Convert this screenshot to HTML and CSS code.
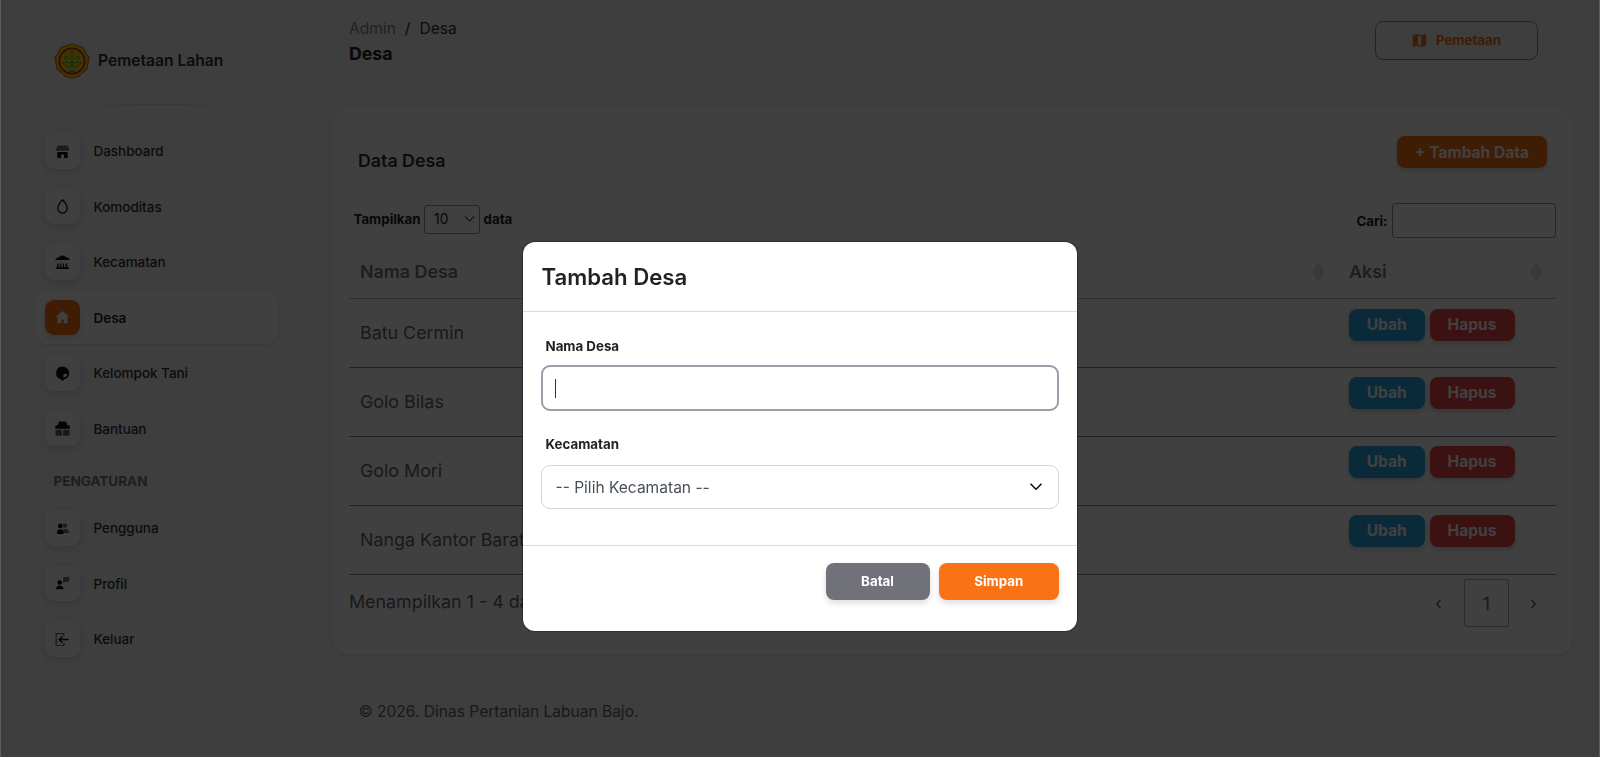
FILE: index.html
```html
<!DOCTYPE html>
<html lang="id">
<head>
<meta charset="utf-8">
<title>Desa</title>
<link rel="stylesheet" href="styles.css">
</head>
<body>
<div class="page">
  <aside class="sidebar">
    <div class="brand">
      <svg class="logo" viewBox="0 0 36 36"><path d="M18 .8 29 4.800 35 14.500 33 26 24.500 33.500 18 35.200 11.500 33.500 3 26 1 14.500 7 4.800z" fill="#fbd213" stroke="#b98a2c" stroke-width="1.200"/><circle cx="18" cy="18" r="12.600" fill="none" stroke="#e02020" stroke-width="1.700"/><g fill="none" stroke="#45b81c" stroke-width="1"><path d="M18 24V14M18 14c-2.300-2-2-4.200 0-6.500 2 2.300 2.300 4.500 0 6.500zM18 20c-4 0-7-2-7.500-6.500 4 .5 6.500 2.500 7.500 6.500zM18 20c4 0 7-2 7.500-6.500-4 .5-6.500 2.500-7.500 6.500zM18 23c-3 1.200-6.500.5-9.500-3 4-1.500 7.500-.5 9.500 3zM18 23c3 1.200 6.500.5 9.500-3-4-1.500-7.500-.5-9.500 3z"/></g><path d="M14 26.500q4 2 8 0-1.500 2.500-4 2.500t-4-2.500z" fill="#2196e8"/></svg>
      <span>Pemetaan Lahan</span>
    </div>
    <div class="rule"></div>
    <nav>
      <a class="item"><i class="ico"><svg viewBox="0 0 16 16"><path d="M2.800 1.500h10.400L15 5.200c0 1.300-.8 2.200-2 2.200s-1.700-.8-1.700-.8-.6.800-1.700.8S8 6.600 8 6.600s-.5.800-1.600.8-1.700-.8-1.700-.8-.5.800-1.700.8-2-.9-2-2.200z" opacity=".6"/><path d="M2.500 8.600h11v6.200h-3.800v-3.600H6.500v3.600h-4z"/></svg></i>Dashboard</a>
      <a class="item"><i class="ico"><svg viewBox="0 0 16 16"><path d="M8 .8C5.300 3.600 3 7 3 9.900a5 5.200 0 0 0 10 0C13 7 10.700 3.600 8 .8z" fill="none" stroke="#111" stroke-width="1.400"/></svg></i>Komoditas</a>
      <a class="item"><i class="ico"><svg viewBox="0 0 16 16"><path d="M8 .3 15.500 4v1.200H.5V4zM2.200 9h1.700v4H2.200zM5.400 9h1.400v4H5.400zM8.300 9h1.400v4H8.300zM11.300 9H13v4h-1.700zM1.500 13h13v.9h.6v1H.9v-1h.6z"/></svg></i>Kecamatan</a>
      <a class="item active"><i class="ico"><svg viewBox="0 0 16 16"><path d="M8 1 15 7.300h-1.800v6.900H9.300V10H6.700v4.200H2.800V7.300H1z" fill="#fff"/></svg></i>Desa</a>
      <a class="item"><i class="ico"><svg viewBox="0 0 16 16"><path d="M8 .6a7 7 0 0 0-2.200 13.600l1 .3.400 1.200h1.600l.5-1.200A7 7 0 0 0 8 .6zM9 12.400V8.500h4.200A4.600 4.600 0 0 1 9 12.400z"/></svg></i>Kelompok Tani</a>
      <a class="item"><i class="ico"><svg viewBox="0 0 16 16"><path d="M.3 8.300V5.800q0-1.300 1.300-1.300h1.600C2.600.6 6.500-1 8 1.100c1.500-2.100 5.400-.5 4.800 3.400h1.600q1.300 0 1.300 1.300v2.500z"/><path d="M.5 9.200h6.900v6.600H1.900Q.5 15.800.5 14.400zM8.600 9.200h6.900v5.200q0 1.400-1.400 1.400H8.600z" opacity=".65"/></svg></i>Bantuan</a>
      <h6 class="section">PENGATURAN</h6>
      <a class="item"><i class="ico"><svg viewBox="0 0 16 16"><g opacity=".6"><circle cx="10.600" cy="5" r="2.300"/><path d="M9 8.500h2.500q3.500 0 3.500 4.300H9.500z"/></g><circle cx="5.700" cy="5.200" r="2.500"/><path d="M2 13.500q-.5-4.800 3.700-4.800t3.700 4.800q-3.700 1-7.400 0z"/></svg></i>Pengguna</a>
      <a class="item"><i class="ico"><svg viewBox="0 0 16 16"><path d="M8.700 1h6.300v5h-4l-2.300 2z" opacity=".6"/><circle cx="5" cy="7" r="2.500"/><path d="M1 14q0-3.600 4-3.600T9 14z"/></svg></i>Profil</a>
      <a class="item"><i class="ico"><svg viewBox="0 0 16 16"><path d="M9.500 4.500V1.800H1.200v12.600h8.300v-2.700" fill="none" stroke="#111" stroke-width="1.300" opacity=".65"/><path d="M14.500 8.100H4.500M8 4.800 4.500 8.100 8 11.400" fill="none" stroke="#111" stroke-width="1.600"/></svg></i>Keluar</a>
    </nav>
  </aside>
  <main class="main">
    <header class="top">
      <div>
        <div class="crumbs"><span class="muted">Admin</span><span>/</span><span>Desa</span></div>
        <h1>Desa</h1>
      </div>
      <a class="map-btn"><svg viewBox="0 0 16 16"><path fill-rule="evenodd" d="M.8 2.600 5.300 1l5.400 1.500L14 1q1.300-.3 1.300 1v11.200L10.700 15l-5.400-1.500L2 15q-1.200.2-1.200-1zM6.200 2.900v9.400l3.600 1V3.900z"/></svg>Pemetaan</a>
    </header>
    <section class="card">
      <div class="card-head"><h2>Data Desa</h2><a class="btn orange">+ Tambah Data</a></div>
      <div class="tools">
        <label class="length">Tampilkan <span class="mini-select">10<svg viewBox="0 0 12 8"><path d="m1.300 1.500 4.700 4.700 4.700-4.700" fill="none" stroke="#333" stroke-width="1.200"/></svg></span> data</label>
        <label class="search">Cari: <input type="text"></label>
      </div>
      <div class="row head"><div>Nama Desa<svg class="sort" viewBox="0 0 14 22"><path d="M7 0l7 11-7 11L0 11z"/></svg></div><div>Aksi<svg class="sort" viewBox="0 0 14 22"><path d="M7 0l7 11-7 11L0 11z"/></svg></div></div>
      <div class="row"><div>Batu Cermin</div><div class="acts"><a class="btn blue">Ubah</a><a class="btn red">Hapus</a></div></div>
      <div class="row"><div>Golo Bilas</div><div class="acts"><a class="btn blue">Ubah</a><a class="btn red">Hapus</a></div></div>
      <div class="row"><div>Golo Mori</div><div class="acts"><a class="btn blue">Ubah</a><a class="btn red">Hapus</a></div></div>
      <div class="row"><div>Nanga Kantor Barat</div><div class="acts"><a class="btn blue">Ubah</a><a class="btn red">Hapus</a></div></div>
      <div class="foot"><span>Menampilkan 1 - 4 dari 4 data</span><div class="pager"><span>‹</span><span class="cur">1</span><span>›</span></div></div>
    </section>
    <footer>© 2026. Dinas Pertanian Labuan Bajo.</footer>
  </main>
</div>
<div class="overlay">
  <div class="modal">
    <h3>Tambah Desa</h3>
    <div class="body">
      <label>Nama Desa</label>
      <div class="field focus"><span class="caret"></span></div>
      <label>Kecamatan</label>
      <div class="field">-- Pilih Kecamatan --<svg viewBox="0 0 12 8"><path d="m1 1.200 5 5 5-5" fill="none" stroke="#111" stroke-width="1.600" stroke-linecap="round" stroke-linejoin="round"/></svg></div>
    </div>
    <div class="actions"><button class="cancel">Batal</button><button class="save">Simpan</button></div>
  </div>
</div>
</body>
</html>
```
FILE: styles.css
```css
* { box-sizing: border-box; }
body { margin: 0; width: 1600px; height: 757px; overflow: hidden; font-family: Inter, sans-serif; color: #333; background: #f5f5f5; }
h1, h2, h3, h6 { margin: 0; }
svg { display: block; }
.page { display: flex; height: 757px; }

.sidebar { width: 331.500px; padding-left: 36px; }
.brand { display: flex; align-items: center; gap: 8.500px; height: 104px; padding: 18px 0 0 17.500px; font-size: 15.600px; font-weight: 600; }
.brand span { padding-bottom: 1px; }
.logo { width: 36px; height: 36px; }
.rule { width: 242px; height: 1px; background: linear-gradient(90deg, transparent, #dcdcdc, transparent); }
nav { padding-top: 19.500px; }
.item { display: flex; align-items: center; gap: 13.500px; width: 242px; height: 53px; margin-bottom: 2.5px; padding-left: 8.5px; border-radius: 12px; font-size: 13.500px; letter-spacing: -.03px; font-weight: 500; }
.ico { display: flex; align-items: center; justify-content: center; width: 35.500px; height: 35.500px; border-radius: 9px; background: #fff; box-shadow: 0 3px 6px rgba(0, 0, 0, .12); }
.ico svg { width: 15px; height: 15px; fill: #111; }
.active { background: #fff; box-shadow: 0 1px 2px rgba(0, 0, 0, .1); color: #222; font-weight: 600; }
.active .ico { background: #f97316; }
.section { height: 44px; padding: 3px 0 0 17.500px; font-size: 13.500px; font-weight: 700; line-height: 41px; color: #777; }

.main { width: 1241.500px; }
.top { display: flex; justify-content: space-between; height: 109px; padding: 18px 35px 0 17.500px; }
.crumbs { display: flex; gap: 9px; font-size: 15.550px; line-height: 21px; }
.muted { color: #888; }
h1 { font-size: 17.700px; line-height: 30px; color: #222; }
.map-btn { display: flex; align-items: center; justify-content: center; gap: 9px; width: 163px; height: 39px; margin-top: 3px; padding-bottom: 1px; border: 1px solid #f97316; border-radius: 8px; color: #f97316; font-size: 13.300px; font-weight: 700; }
.map-btn svg { width: 15px; height: 15px; fill: #f97316; }

.card { height: 545px; padding: 27px 17px 0 17.500px; border-radius: 16px; background: #fff; box-shadow: 0 1px 3px rgba(0, 0, 0, .1); }
.card-head { display: flex; justify-content: space-between; height: 67px; padding: 0 9px; }
h2 { padding-top: 14px; font-size: 17.800px; font-weight: 600; line-height: 22px; }
.btn { display: flex; align-items: center; justify-content: center; height: 32px; border-radius: 8px; color: #fff; font-size: 15.550px; font-weight: 700; box-shadow: 0 3px 5px rgba(0, 0, 0, .16); }
.orange { width: 150px; background: #f97316; }
.blue { width: 75.500px; background: #2ba7e5; }
.red { width: 85px; background: #ef4444; }
.tools { display: flex; justify-content: space-between; height: 43px; font-size: 13.300px; font-weight: 700; color: #222; }
.length, .search { display: flex; align-items: center; gap: 4px; }
.length { gap: 3.500px; height: 32px; padding-left: 4.500px; }
.search { height: 35px; line-height: 14px; }
.search input { width: 164.500px; height: 35px; border: 1px solid #999; border-radius: 3px; background: #fff; }
.mini-select { display: flex; align-items: center; justify-content: space-between; width: 56px; height: 29px; padding: 0 4px 0 9px; border: 1px solid #999; border-radius: 3px; font-size: 13.800px; font-weight: 400; }
.mini-select svg { width: 11px; height: 8px; }
.row { display: grid; grid-template-columns: 989px 218px; height: 68.900px; border-bottom: 1px solid #888; font-size: 17.850px; line-height: 68px; color: #666; }
.row > div { padding-left: 11px; }
.row.head { height: 53px; border-bottom-color: #bbb; line-height: 52px; font-weight: 600; color: #777; }
.head > div { display: flex; align-items: center; justify-content: space-between; padding-right: 13px; }
.sort { width: 13px; height: 20px; fill: #e4e4e4; }
.acts { display: flex; gap: 5px; padding-top: 9.500px; }
.foot { display: flex; justify-content: space-between; padding-top: 4px; font-size: 17.850px; line-height: 46.500px; color: #666; }
.pager { display: flex; }
.pager span { width: 41px; height: 48px; text-align: center; line-height: 48px; }
.pager .cur { width: 45px; margin: 0 4px 0 5px; border: 1px solid #aaa; border-radius: 2px; }
.pager span:last-child { margin-right: 2px; }
footer { padding: 45.500px 0 0 27px; font-size: 15.550px; line-height: 23px; color: #666; }

.overlay { position: fixed; inset: 0; padding: 242px 0 0 523px; border: solid #5d5d5d; border-width: 0 1px; background: rgba(0, 0, 0, .75); background-clip: padding-box; }
.modal { width: 554px; height: 389px; margin-left: -1px; border-radius: 12px; background: #fff; box-shadow: 0 0 2px #000; }
h3 { height: 70px; padding: 0 18.500px; border-bottom: 1px solid #d8dade; font-size: 22.200px; font-weight: 600; line-height: 70px; color: #222; }
.body { height: 234px; padding: 26px 18px 0; border-bottom: 1px solid #d8dade; }
.body label { display: block; height: 27px; padding-left: 4.500px; font-size: 13.300px; font-weight: 700; line-height: 16px; color: #222; }
.field { display: flex; align-items: center; justify-content: space-between; height: 44px; padding: 0 16.500px 0 13.500px; border: 1px solid #d2d6da; border-radius: 9px; font-size: 15.550px; color: #495057; }
.field.focus { height: 46px; margin-bottom: 26px; padding-left: 12px; border: 2px solid #9d9dab; }
.field.focus + label { height: 28px; line-height: 15px; }
.caret { width: 1px; height: 19px; background: #333; }
.field svg { width: 12px; height: 8px; }
.actions { display: flex; justify-content: flex-end; gap: 9px; padding: 17px 18px 0; }
.actions button { height: 37px; padding: 0 0 1px; border: 0; border-radius: 8px; color: #fff; font: 700 13.300px Inter, sans-serif; box-shadow: 0 3px 6px rgba(0, 0, 0, .14); }
.cancel { width: 104px; background: #71717a; }
.actions .save { width: 120.500px; background: #f97316; }
```
